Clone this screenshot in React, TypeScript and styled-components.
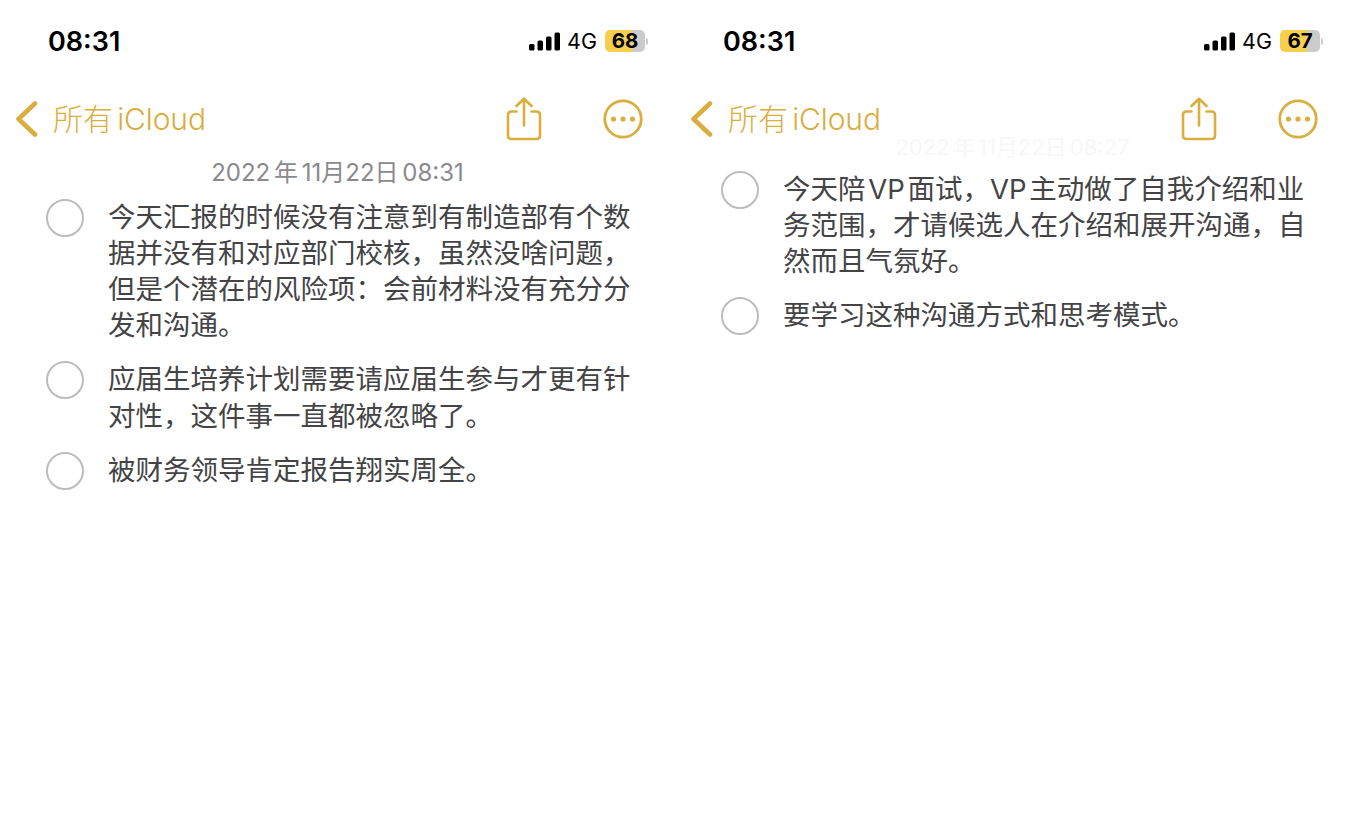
import React from 'react';
import styled, { createGlobalStyle } from 'styled-components';

const GOLD = '#d9ae3f';

const GlobalStyle = createGlobalStyle`
  html, body {
    margin: 0;
    padding: 0;
    background: #fff;
  }
  body {
    font-family: Inter, "Noto Sans CJK SC", sans-serif;
  }
`;

type NoteData = {
  battery: string;
  level: number;
  date: string;
  faded?: boolean;
  items: string[][];
};

const notes: NoteData[] = [
  {
    battery: '68',
    level: 68,
    date: '2022 年 11月22日 08:31',
    items: [
      [
        '今天汇报的时候没有注意到有制造部有个数',
        '据并没有和对应部门校核，虽然没啥问题，',
        '但是个潜在的风险项：会前材料没有充分分',
        '发和沟通。',
      ],
      ['应届生培养计划需要请应届生参与才更有针', '对性，这件事一直都被忽略了。'],
      ['被财务领导肯定报告翔实周全。'],
    ],
  },
  {
    battery: '67',
    level: 67,
    date: '2022 年 11月22日 08:27',
    faded: true,
    items: [
      [
        '今天陪 VP 面试，VP 主动做了自我介绍和业',
        '务范围，才请候选人在介绍和展开沟通，自',
        '然而且气氛好。',
      ],
      ['要学习这种沟通方式和思考模式。'],
    ],
  },
];

const SignalIcon = () => (
  <svg width="32" height="19" viewBox="0 0 32 19" fill="#000">
    <rect x="0" y="12" width="5.5" height="6.5" rx="1.5" />
    <rect x="8.5" y="8.5" width="5.5" height="10" rx="1.5" />
    <rect x="17" y="4.5" width="5.5" height="14" rx="1.5" />
    <rect x="25.5" y="0.5" width="5.5" height="18" rx="1.5" />
  </svg>
);

const BackIcon = () => (
  <svg width="24" height="36" viewBox="0 0 24 36" fill="none">
    <path d="M20 2.5 L3.5 18 L20 33.5" stroke={GOLD} strokeWidth="4.6" strokeLinecap="round" strokeLinejoin="round" />
  </svg>
);

const ShareIcon = () => (
  <svg width="36" height="44" viewBox="0 0 36 44" fill="none" stroke={GOLD} strokeWidth="2.6" strokeLinecap="round" strokeLinejoin="round">
    <path d="M10.5 14.5 H5.5 Q2 14.5 2 18 V38.5 Q2 42 5.5 42 H30.5 Q34 42 34 38.5 V18 Q34 14.5 30.5 14.5 H25.5" />
    <path d="M18 28.5 V2 M10.5 9 L18 1.8 L25.5 9" />
  </svg>
);

const MoreIcon = () => (
  <svg width="40" height="40" viewBox="0 0 40 40">
    <circle cx="20" cy="20" r="18.2" fill="none" stroke={GOLD} strokeWidth="2.8" />
    <circle cx="10.5" cy="20" r="2.6" fill={GOLD} />
    <circle cx="20" cy="20" r="2.6" fill={GOLD} />
    <circle cx="29.5" cy="20" r="2.6" fill={GOLD} />
  </svg>
);

const Note = ({ data }: { data: NoteData }) => (
  <Pane>
    <StatusBar>
      <Clock>08:31</Clock>
      <StatusRight>
        <SignalIcon />
        <Network>4G</Network>
        <Battery>
          <BatteryBody level={data.level}>{data.battery}</BatteryBody>
          <BatteryTip />
        </Battery>
      </StatusRight>
    </StatusBar>
    <NavBar>
      <BackLink>
        <BackIcon />
        <BackLabel>所有 iCloud</BackLabel>
      </BackLink>
      <NavActions>
        <ShareIcon />
        <MoreIcon />
      </NavActions>
    </NavBar>
    <DateLine $faded={data.faded}>{data.date}</DateLine>
    <CheckList $faded={data.faded}>
      {data.items.map((lines) => (
        <CheckItem key={lines[0]}>
          <Circle />
          <ItemText>
            {lines.map((line) => (
              <div key={line}>{line}</div>
            ))}
          </ItemText>
        </CheckItem>
      ))}
    </CheckList>
  </Pane>
);

const App = () => (
  <>
    <GlobalStyle />
    <Page>
      {notes.map((note) => (
        <Note key={note.battery} data={note} />
      ))}
    </Page>
  </>
);

export default App;

const Page = styled.div`
  display: grid;
  grid-template-columns: 675px 675px;
  width: 1350px;
  height: 818px;
  overflow: hidden;
`;

const Pane = styled.div`
  display: flex;
  flex-direction: column;
`;

const StatusBar = styled.div`
  display: flex;
  justify-content: space-between;
  align-items: center;
  height: 40px;
  margin-top: 21px;
  padding: 0 27px 0 48px;
`;

const Clock = styled.span`
  font-size: 27px;
  font-weight: 600;
  color: #000;
`;

const StatusRight = styled.div`
  display: flex;
  align-items: center;
`;

const Network = styled.span`
  margin: 0 8px 0 6px;
  font-size: 21.5px;
  color: #000;
`;

const Battery = styled.div`
  display: flex;
  align-items: center;
`;

const BatteryBody = styled.div<{ level: number }>`
  width: 40px;
  height: 22px;
  border-radius: 5px;
  background: linear-gradient(
    to right,
    #f6cf4f ${(p) => p.level}%,
    #cbcbcb ${(p) => p.level}%
  );
  color: #000;
  font-size: 20.5px;
  font-weight: 700;
  line-height: 22px;
  text-align: center;
`;

const BatteryTip = styled.div`
  width: 2px;
  height: 7px;
  margin-left: 1px;
  border-radius: 0 2px 2px 0;
  background: #cbcbcb;
`;

const NavBar = styled.div`
  display: flex;
  justify-content: space-between;
  align-items: center;
  height: 48px;
  margin-top: 34px;
  padding: 0 32px 0 15px;
`;

const BackLink = styled.div`
  display: flex;
  align-items: center;
  gap: 14px;
  color: ${GOLD};
`;

const BackLabel = styled.span`
  padding-bottom: 4px;
  font-size: 30px;
  font-weight: 300;
  color: ${GOLD};
  word-spacing: -4px;
  letter-spacing: -0.1px;
`;

const NavActions = styled.div`
  display: flex;
  align-items: center;
  gap: 61px;
`;

const DateLine = styled.div<{ $faded?: boolean }>`
  height: 30px;
  margin-top: ${(p) => (p.$faded ? '-11px' : '15px')};
  font-size: ${(p) => (p.$faded ? '22px' : '24px')};
  line-height: 30px;
  text-align: center;
  color: ${(p) => (p.$faded ? '#f7f7f7' : '#8a8a8e')};
  word-spacing: -3px;
`;

const CheckList = styled.div<{ $faded?: boolean }>`
  display: flex;
  flex-direction: column;
  gap: 17.8px;
  margin-top: ${(p) => (p.$faded ? '8.5px' : '10.5px')};
  padding: 0 44px 0 46px;
`;

const CheckItem = styled.div`
  display: flex;
  align-items: flex-start;
  gap: 24px;
`;

const Circle = styled.div`
  flex: none;
  box-sizing: border-box;
  width: 38px;
  height: 38px;
  border: 2px solid #bcbcbc;
  border-radius: 50%;
`;

const ItemText = styled.div`
  font-size: 27.5px;
  line-height: 36.3px;
  color: #444446;
  white-space: nowrap;
  word-spacing: -5px;
`;
